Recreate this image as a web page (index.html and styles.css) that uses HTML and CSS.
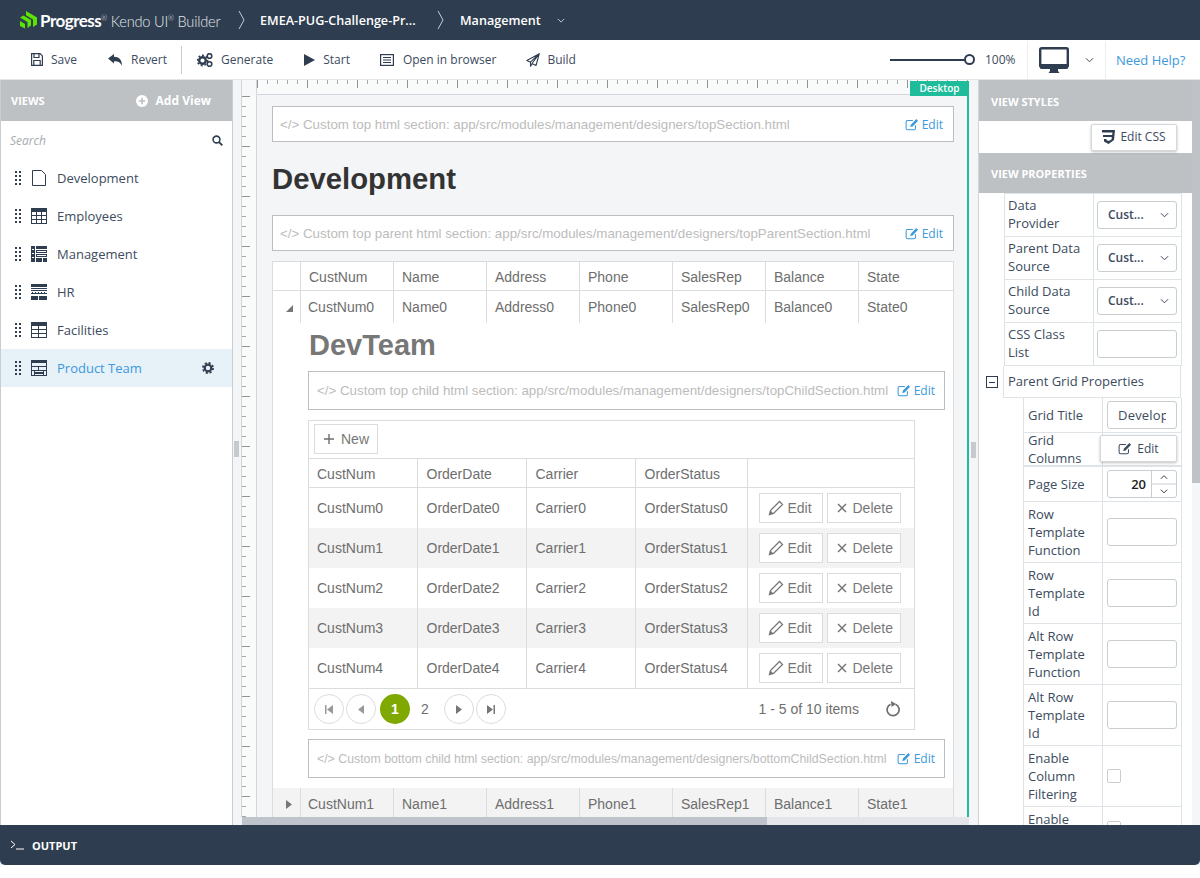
FILE: index.html
```html
<!DOCTYPE html>
<html lang="en">
<head>
  <meta charset="UTF-8">
  <title>Kendo UI Builder</title>
  <link rel="stylesheet" href="styles.css">
</head>
<body>
  <svg class="defs" width="0" height="0">
    <symbol id="dots" viewBox="0 0 6 14"><g fill="#2e3d50"><rect x="0" y="0" width="2" height="2"/><rect x="4" y="0" width="2" height="2"/><rect x="0" y="4" width="2" height="2"/><rect x="4" y="4" width="2" height="2"/><rect x="0" y="8" width="2" height="2"/><rect x="4" y="8" width="2" height="2"/><rect x="0" y="12" width="2" height="2"/><rect x="4" y="12" width="2" height="2"/></g></symbol>
    <symbol id="pencil" viewBox="0 0 16 16"><path d="M1.500 14.500l1-4L11.500 1.500l3 3-9 9z" fill="none" stroke="currentColor" stroke-width="1.300"/><path d="M2.500 10.500l3 3-4 1z" fill="currentColor"/></symbol>
    <symbol id="cross" viewBox="0 0 12 12"><path d="M2 2l8 8M10 2l-8 8" stroke="currentColor" stroke-width="1.500" fill="none"/></symbol>
    <symbol id="edit" viewBox="0 0 16 15"><path d="M12 8.500v3.200A1.800 1.800 0 0 1 10.200 13.500H3A1.800 1.800 0 0 1 1.200 11.700V4.800A1.800 1.800 0 0 1 3 3h6" fill="none" stroke="currentColor" stroke-width="1.200"/><path d="M6 10.500l.6-2.800L13 1.200l2 2-6.300 6.500z" fill="currentColor"/></symbol>
    <symbol id="chev" viewBox="0 0 10 6"><path d="M1 1l4 4 4-4" fill="none" stroke="currentColor" stroke-width="1.100"/></symbol>
  </svg>

  <div class="app">
    <header class="topbar">
      <svg class="logo" width="17" height="18" viewBox="0 0 17 18"><path d="M6 0l11 6.500v7L13 16V8.500L6 4.300z" fill="#5ce500"/><path d="M0 6.500l3.500-2L11 9v5.500L7.500 17v-6zM0 10l5 3v4.500L0 15z" fill="#5ce500"/></svg>
      <span class="brand"><b>Progress</b><sup>®</sup> Kendo UI<sup>®</sup> Builder</span>
      <svg class="crumb-sep" width="7" height="20" viewBox="0 0 7 20"><path d="M1 1l5 9-5 9" fill="none" stroke="#c6ccd4" stroke-width="1"/></svg>
      <span class="crumb project">EMEA-PUG-Challenge-Pr...</span>
      <svg class="crumb-sep" width="7" height="20" viewBox="0 0 7 20"><path d="M1 1l5 9-5 9" fill="none" stroke="#c6ccd4" stroke-width="1"/></svg>
      <span class="crumb">Management</span>
      <svg class="crumb-chev" width="8" height="5"><use href="#chev"/></svg>
    </header>

    <nav class="toolbar">
      <a class="tool save"><svg width="12" height="13" viewBox="0 0 12 13"><path d="M.6.6h8.500l2.300 2.300v9.500H.6z" fill="none" stroke="#2e3d50" stroke-width="1.200"/><path d="M3 1v3.500h5V1M2.800 12V7.500h6.400V12" fill="none" stroke="#2e3d50" stroke-width="1.200"/></svg>Save</a>
      <a class="tool revert"><svg width="14" height="12" viewBox="0 0 14 12"><path d="M0 4.500L6 0v2.800c5 0 8 2.700 8 9.200-1.500-3.500-3.500-4.700-8-4.700V9.500z" fill="#2e3d50"/></svg>Revert</a>
      <span class="tool-sep"></span>
      <a class="tool generate"><svg width="16" height="14" viewBox="0 0 16 14"><circle cx="5.500" cy="7.500" r="3.300" fill="none" stroke="#2e3d50" stroke-width="2.400"/><circle cx="5.500" cy="7.500" r="5.200" fill="none" stroke="#2e3d50" stroke-width="1.400" stroke-dasharray="2 1.900"/><circle cx="12.500" cy="3" r="2.300" fill="none" stroke="#2e3d50" stroke-width="1.600"/><circle cx="12.500" cy="11" r="2.300" fill="none" stroke="#2e3d50" stroke-width="1.600"/></svg>Generate</a>
      <a class="tool start"><svg width="11" height="12" viewBox="0 0 11 12"><path d="M0 0l11 6-11 6z" fill="#2e3d50"/></svg>Start</a>
      <a class="tool browser"><svg width="14" height="12" viewBox="0 0 14 12"><rect x=".6" y=".6" width="12.800" height="10.800" fill="none" stroke="#2e3d50" stroke-width="1.200"/><path d="M3 3.500h8M3 6h8M3 8.500h8" stroke="#2e3d50" stroke-width="1.200"/></svg>Open in browser</a>
      <a class="tool build"><svg width="14" height="14" viewBox="0 0 14 14"><path d="M13.300.7L.8 7.500l3.700 1.700L13.300.7 6 10.500l4 2zM4.500 9.200v4l1.800-2.500" fill="none" stroke="#2e3d50" stroke-width="1.100" stroke-linejoin="round"/></svg>Build</a>
      <div class="zoom-slider"><span class="zoom-line"></span><span class="zoom-knob"></span></div>
      <span class="zoom-value">100%</span>
      <span class="tool-sep light"></span>
      <svg class="monitor" width="30" height="26" viewBox="0 0 30 26"><rect x="1.200" y="1.200" width="27.600" height="18.800" rx="1.500" fill="none" stroke="#2e3d50" stroke-width="2.400"/><path d="M1 17h28v3.500a1.500 1.500 0 0 1-1.500 1.500h-25A1.500 1.500 0 0 1 1 20.500z" fill="#2e3d50"/><path d="M11 22h8v2l1.500 2h-11l1.500-2z" fill="#2e3d50"/></svg>
      <svg class="monitor-chev" width="9" height="6"><use href="#chev"/></svg>
      <span class="tool-sep light"></span>
      <a class="help">Need Help?</a>
    </nav>

    <main class="main">
      <aside class="views">
        <div class="panel-head"><span>VIEWS</span><span class="add-view"><svg width="12" height="12" viewBox="0 0 12 12"><circle cx="6" cy="6" r="6" fill="#fff"/><path d="M6 2.800v6.400M2.800 6h6.400" stroke="#bdc1c4" stroke-width="1.600"/></svg>Add View</span></div>
        <div class="search"><span>Search</span><svg width="11" height="11" viewBox="0 0 11 11"><circle cx="4.500" cy="4.500" r="3.400" fill="none" stroke="#2e3d50" stroke-width="1.600"/><path d="M7 7l3.300 3.300" stroke="#2e3d50" stroke-width="1.800"/></svg></div>
        <ul class="view-list">
          <li><svg class="drag"><use href="#dots"/></svg><svg class="view-icon" viewBox="0 0 16 16"><path d="M1.500.5h9l4 4v11h-13z" fill="none" stroke="#2e3d50" stroke-width="1"/></svg>Development</li>
          <li><svg class="drag"><use href="#dots"/></svg><svg class="view-icon" viewBox="0 0 16 16"><path d="M0 0h16v16H0z" fill="#2e3d50"/><path d="M1 4h4v3H1zM6 4h4v3H6zM11 4h4v3h-4zM1 8h4v3H1zM6 8h4v3H6zM11 8h4v3h-4zM1 12h4v3H1zM6 12h4v3H6zM11 12h4v3h-4z" fill="#fff"/></svg>Employees</li>
          <li><svg class="drag"><use href="#dots"/></svg><svg class="view-icon" viewBox="0 0 16 16"><path d="M0 0h4v16H0zM5 0h11v3H5zM5 4h11v3H5zM5 8h11v3H5zM5 12h6v4H5zM12 12h4v4h-4z" fill="#2e3d50"/><path d="M1 3h2v1H1zM1 7h2v1H1zM1 11h2v1H1zM6 5h9v1H6zM6 9h9v1H6z" fill="#fff"/></svg>Management</li>
          <li><svg class="drag"><use href="#dots"/></svg><svg class="view-icon" viewBox="0 0 16 16"><path d="M0 0h16v3H0zM0 4h16v1H0zM0 6h16v1H0zM0 9h16v1H0zM0 12h7v4H0zM8 12h8v4H8zM1 8h1v1H1zM4 8h1v1H4zM7 8h1v1H7zM10 8h1v1h-1zM13 8h1v1h-1z" fill="#2e3d50"/></svg>HR</li>
          <li><svg class="drag"><use href="#dots"/></svg><svg class="view-icon" viewBox="0 0 16 16"><path d="M0 0h16v16H0z" fill="#2e3d50"/><path d="M1 4h6v3H1zM8 4h7v3H8zM1 8h6v3H1zM8 8h7v3H8zM1 12h6v3H1zM8 12h7v3H8z" fill="#fff"/></svg>Facilities</li>
          <li class="active"><svg class="drag"><use href="#dots"/></svg><svg class="view-icon" viewBox="0 0 16 16"><path d="M0 0h16v16H0z" fill="#2e3d50"/><path d="M1 3h14v3H1zM1 7h6v3H1zM8 7h7v3H8zM1 11h2v4H1zM4 11h8v1H4zM4 14h8v1H4zM13 11h2v4h-2z" fill="#e6f1f8"/></svg>Product Team<svg class="gear" width="12" height="12" viewBox="0 0 12 12"><circle cx="6" cy="6" r="3.300" fill="none" stroke="#2e3d50" stroke-width="2.200"/><circle cx="6" cy="6" r="5.100" fill="none" stroke="#2e3d50" stroke-width="1.700" stroke-dasharray="2.200 1.800"/></svg></li>
        </ul>
      </aside>

      <section class="stage">
        <div class="gutter"><span class="grip"></span></div>
        <div class="ruler-corner"></div>
        <div class="ruler-top"><span class="badge">Desktop</span></div>
        <div class="gutter gutter-right"><span class="grip"></span></div>
        <div class="ruler-left"></div>
        <div class="canvas">
          <div class="code-box"><span>&lt;/&gt; Custom top html section: app/src/modules/management/designers/topSection.html</span><a class="code-edit"><svg width="14" height="13"><use href="#edit"/></svg>Edit</a></div>
          <h1 class="page-title">Development</h1>
          <div class="code-box"><span>&lt;/&gt; Custom top parent html section: app/src/modules/management/designers/topParentSection.html</span><a class="code-edit"><svg width="14" height="13"><use href="#edit"/></svg>Edit</a></div>

          <table class="grid parent-grid">
            <colgroup><col class="c-exp"><col class="c-p"><col class="c-p"><col class="c-p"><col class="c-p"><col class="c-p"><col class="c-p"><col></colgroup>
            <thead>
              <tr><th></th><th>CustNum</th><th>Name</th><th>Address</th><th>Phone</th><th>SalesRep</th><th>Balance</th><th>State</th></tr>
            </thead>
            <tbody>
              <tr class="row-open"><td class="exp"><svg width="7" height="7" viewBox="0 0 7 7"><path d="M7 0v7H0z" fill="#777"/></svg></td><td>CustNum0</td><td>Name0</td><td>Address0</td><td>Phone0</td><td>SalesRep0</td><td>Balance0</td><td>State0</td></tr>
              <tr>
                <td colspan="8" class="detail-cell">
                  <div class="detail">
                    <h2 class="detail-title">DevTeam</h2>
                    <div class="code-box child-box"><span>&lt;/&gt; Custom top child html section: app/src/modules/management/designers/topChildSection.html</span><a class="code-edit"><svg width="14" height="13"><use href="#edit"/></svg>Edit</a></div>

                    <div class="child-grid">
                      <div class="child-toolbar"><a class="btn"><svg width="12" height="12" viewBox="0 0 12 12"><path d="M6 1v10M1 6h10" stroke="#6e6e6e" stroke-width="1.400"/></svg>New</a></div>
                      <table class="grid">
                        <colgroup><col class="c1"><col class="c2"><col class="c3"><col class="c4"><col></colgroup>
                        <thead><tr><th>CustNum</th><th>OrderDate</th><th>Carrier</th><th>OrderStatus</th><th></th></tr></thead>
                        <tbody>
                          <tr><td>CustNum0</td><td>OrderDate0</td><td>Carrier0</td><td>OrderStatus0</td><td class="actions"><a class="btn"><svg width="16" height="16"><use href="#pencil"/></svg>Edit</a><a class="btn"><svg width="12" height="12"><use href="#cross"/></svg>Delete</a></td></tr>
                          <tr class="alt"><td>CustNum1</td><td>OrderDate1</td><td>Carrier1</td><td>OrderStatus1</td><td class="actions"><a class="btn"><svg width="16" height="16"><use href="#pencil"/></svg>Edit</a><a class="btn"><svg width="12" height="12"><use href="#cross"/></svg>Delete</a></td></tr>
                          <tr><td>CustNum2</td><td>OrderDate2</td><td>Carrier2</td><td>OrderStatus2</td><td class="actions"><a class="btn"><svg width="16" height="16"><use href="#pencil"/></svg>Edit</a><a class="btn"><svg width="12" height="12"><use href="#cross"/></svg>Delete</a></td></tr>
                          <tr class="alt"><td>CustNum3</td><td>OrderDate3</td><td>Carrier3</td><td>OrderStatus3</td><td class="actions"><a class="btn"><svg width="16" height="16"><use href="#pencil"/></svg>Edit</a><a class="btn"><svg width="12" height="12"><use href="#cross"/></svg>Delete</a></td></tr>
                          <tr><td>CustNum4</td><td>OrderDate4</td><td>Carrier4</td><td>OrderStatus4</td><td class="actions"><a class="btn"><svg width="16" height="16"><use href="#pencil"/></svg>Edit</a><a class="btn"><svg width="12" height="12"><use href="#cross"/></svg>Delete</a></td></tr>
                        </tbody>
                      </table>
                      <div class="pager">
                        <a class="page-btn"><svg width="8" height="9" viewBox="0 0 8 9"><path d="M0 0h1.500v9H0zM8 0v9L2 4.500z" fill="#999"/></svg></a>
                        <a class="page-btn"><svg width="6" height="9" viewBox="0 0 6 9"><path d="M6 0v9L0 4.500z" fill="#999"/></svg></a>
                        <a class="page-num current">1</a>
                        <a class="page-num">2</a>
                        <a class="page-btn"><svg width="6" height="9" viewBox="0 0 6 9"><path d="M0 0v9l6-4.500z" fill="#777"/></svg></a>
                        <a class="page-btn"><svg width="8" height="9" viewBox="0 0 8 9"><path d="M0 0v9l6-4.500zM6.500 0H8v9H6.500z" fill="#777"/></svg></a>
                        <span class="page-info">1 - 5 of 10 items</span>
                        <svg class="refresh" width="15" height="16" viewBox="0 0 15 16"><path d="M9.500 3.200A6 6 0 1 1 4.500 3.300" fill="none" stroke="#6e6e6e" stroke-width="1.700"/><path d="M5 0l5 3-4.500 3z" fill="#6e6e6e"/></svg>
                      </div>
                    </div>

                    <div class="code-box child-box bottom-box"><span>&lt;/&gt; Custom bottom child html section: app/src/modules/management/designers/bottomChildSection.html</span><a class="code-edit"><svg width="14" height="13"><use href="#edit"/></svg>Edit</a></div>
                  </div>
                </td>
              </tr>
              <tr class="alt row-closed"><td class="exp"><svg width="6" height="9" viewBox="0 0 6 9"><path d="M0 0v9l6-4.500z" fill="#777"/></svg></td><td>CustNum1</td><td>Name1</td><td>Address1</td><td>Phone1</td><td>SalesRep1</td><td>Balance1</td><td>State1</td></tr>
            </tbody>
          </table>
        </div>
        <div class="hscroll"><span class="hscroll-thumb"></span></div>
      </section>

      <aside class="props">
        <div class="props-body">
          <div class="panel-head">VIEW STYLES</div>
          <div class="css-row"><a class="raised css-btn"><svg width="13" height="14" viewBox="0 0 13 14"><path d="M0 0h13l-1 10-5.500 4L2 11.500V9h2.500v1l2 1 3-1.500.3-2.500H1V5h9.200l.2-2.500H0z" fill="#2e3d50"/></svg>Edit CSS</a></div>
          <div class="panel-head short">VIEW PROPERTIES</div>

          <div class="prop-table">
            <div class="prop"><label>Data Provider</label><div class="field"><span class="select">Cust...<svg width="9" height="6"><use href="#chev"/></svg></span></div></div>
            <div class="prop"><label>Parent Data Source</label><div class="field"><span class="select">Cust...<svg width="9" height="6"><use href="#chev"/></svg></span></div></div>
            <div class="prop"><label>Child Data Source</label><div class="field"><span class="select">Cust...<svg width="9" height="6"><use href="#chev"/></svg></span></div></div>
            <div class="prop"><label>CSS Class List</label><div class="field"><span class="input"></span></div></div>
          </div>

          <div class="group-row"><span class="toggle"></span><span class="group-name">Parent Grid Properties</span></div>

          <div class="prop-table nested">
            <div class="prop"><label>Grid Title</label><div class="field"><span class="input"><span class="clip">Develop</span></span></div></div>
            <div class="prop tight"><label>Grid Columns</label><div class="field"><a class="raised cols-btn"><svg width="14" height="13"><use href="#edit"/></svg>Edit</a></div></div>
            <div class="prop"><label>Page Size</label><div class="field"><span class="spinner"><b>20</b><span class="spin"><svg width="9" height="6" class="up"><use href="#chev"/></svg><svg width="9" height="6"><use href="#chev"/></svg></span></span></div></div>
            <div class="prop"><label>Row Template Function</label><div class="field"><span class="input"></span></div></div>
            <div class="prop"><label>Row Template Id</label><div class="field"><span class="input"></span></div></div>
            <div class="prop"><label>Alt Row Template Function</label><div class="field"><span class="input"></span></div></div>
            <div class="prop"><label>Alt Row Template Id</label><div class="field"><span class="input"></span></div></div>
            <div class="prop"><label>Enable Column Filtering</label><div class="field"><span class="check"></span></div></div>
            <div class="prop"><label>Enable Paging</label><div class="field"><span class="check"></span></div></div>
          </div>
        </div>
        <div class="vscroll"><span class="vscroll-thumb"></span></div>
      </aside>
    </main>

    <footer class="output"><svg width="14" height="10" viewBox="0 0 14 10"><path d="M1 1l4 3.500L1 8" fill="none" stroke="#fff" stroke-width="1"/><path d="M6 9h8" stroke="#fff" stroke-width="1"/></svg>OUTPUT</footer>
  </div>
</body>
</html>
```

FILE: styles.css
```css
* {
  box-sizing: border-box;
}
body {
  margin: 0;
  background: #fff;
  font-family: "Open Sans", sans-serif;
  font-size: 12px;
  color: #3c4b5e;
}
.defs {
  position: absolute;
}
ul {
  margin: 0;
  padding: 0;
  list-style: none;
}
.app {
  width: 1200px;
  height: 865px;
  display: flex;
  flex-direction: column;
  border-radius: 0 0 5px 5px;
  box-shadow: 0 4px 14px rgba(0, 0, 0, 0.18);
}

/* top bar */
.topbar {
  height: 40px;
  flex: none;
  display: flex;
  align-items: center;
  padding-left: 20px;
  background: #2e3d50;
  color: #fff;
}
.logo {
  margin-right: 3px;
}
.brand {
  font-family: "Lato", sans-serif;
  font-size: 14.600px;
  font-weight: 300;
  letter-spacing: -0.2px;
  color: #e4e7ea;
  width: 198px;
  white-space: nowrap;
}
.brand b {
  font-size: 17px;
  font-weight: 700;
  color: #fff;
  letter-spacing: -0.5px;
}
.brand sup {
  font-size: 7px;
  line-height: 0;
}
.crumb-sep {
  margin-right: 16px;
}
.brand + .crumb-sep {
  margin-right: 15px;
}
.crumb {
  font-size: 12.600px;
  font-weight: 600;
  white-space: nowrap;
}
.crumb.project {
  width: 177px;
}
.crumb-chev {
  margin-left: 16px;
  color: #d5d9de;
}

/* tool bar */
.toolbar {
  height: 40px;
  flex: none;
  display: flex;
  align-items: center;
  background: #fff;
  padding-left: 31px;
  border-bottom: 1px solid #e3e5e8;
}
.tool {
  display: flex;
  align-items: center;
  white-space: nowrap;
}
.tool svg {
  margin-right: 9px;
}
.tool.save svg {
  margin-right: 8px;
}
.tool.save {
  margin-right: 31px;
}
.tool.revert {
  margin-right: 14px;
}
.tool-sep {
  width: 1px;
  height: 28px;
  background: #c9ccd0;
}
.tool-sep.light {
  height: 38px;
  background: #eceef0;
}
.tool.generate {
  margin-left: 15px;
  margin-right: 31px;
}
.tool.generate svg {
  margin-right: 8px;
}
.tool.start svg {
  margin-right: 8px;
}
.tool.start {
  margin-right: 30px;
}
.tool.browser {
  margin-right: 30px;
}
.tool.build svg {
  margin-right: 7px;
}
.zoom-slider {
  width: 85px;
  margin-left: 314px;
  display: flex;
  align-items: center;
}
.zoom-line {
  width: 75px;
  height: 2px;
  background: #2e3d50;
}
.zoom-knob {
  width: 11px;
  height: 11px;
  border: 2px solid #2e3d50;
  border-radius: 50%;
  background: #fff;
  margin-left: -1px;
}
.zoom-value {
  margin-left: 10px;
  width: 42px;
}
.monitor {
  margin-left: 11px;
}
.monitor-chev {
  margin: 0 11px 0 16px;
  color: #3c4b5e;
}
.help {
  margin-left: 10px;
  font-size: 13px;
  color: #3b99dc;
  white-space: nowrap;
}

/* main area */
.main {
  flex: 1;
  min-height: 0;
  display: flex;
  overflow: hidden;
}
.panel-head {
  height: 41px;
  display: flex;
  align-items: center;
  justify-content: space-between;
  padding: 2px 12px 0;
  background: #bdc1c4;
  color: #fff;
  font-size: 11px;
  font-weight: 700;
}
.panel-head.short {
  height: 40px;
}

/* views list */
.views {
  width: 233px;
  flex: none;
  border-left: 1px solid #c9cdd1;
  border-right: 1px solid #c9cdd1;
  background: #fff;
}
.views .panel-head {
  padding: 0 21px 0 10px;
}
.add-view {
  display: flex;
  align-items: center;
  font-size: 12px;
}
.add-view svg {
  margin-right: 8px;
}
.search {
  height: 38px;
  display: flex;
  align-items: center;
  justify-content: space-between;
  padding: 0 9px;
  font-size: 12px;
  font-style: italic;
  color: #a6abb2;
}
.view-list li {
  height: 38px;
  display: flex;
  align-items: center;
  padding-left: 14px;
  font-size: 13px;
}
.view-list li.active {
  background: #e6f1f8;
  color: #3b99dc;
}
.drag {
  width: 6px;
  height: 14px;
  margin-right: 10px;
}
.view-icon {
  width: 16px;
  height: 16px;
  margin-right: 10px;
}
.gear {
  margin-left: auto;
  margin-right: 18px;
}

/* design stage */
.stage {
  width: 745px;
  flex: none;
  display: grid;
  grid-template-columns: 9px 15px 712px 9px;
  grid-template-rows: 15px 722px 8px;
  background: #f4f5f7;
}
.gutter {
  grid-row: 1 / 3;
  display: flex;
  align-items: center;
  justify-content: center;
  border-right: 1px solid #d2d5d9;
  padding-right: 1px;
}
.gutter-right {
  grid-column: 4;
  grid-row: 1 / 4;
  border-right: 0;
  padding: 0 0 6px;
}
.grip {
  width: 5px;
  height: 16px;
  background: #c6c9cd;
}
.ruler-corner {
  grid-column: 2;
  grid-row: 1;
  background: #f7f8f9;
  border-right: 1px solid #d2d5d9;
  border-bottom: 1px solid #f7f8f9;
}
.ruler-top {
  grid-column: 3;
  grid-row: 1;
  position: relative;
  border-bottom: 1px solid #d2d5d9;
  background:
    repeating-linear-gradient(90deg, #8f9499 0 1px, transparent 1px 50px) 0 0 / 100% 8px no-repeat,
    repeating-linear-gradient(90deg, #a5a9ae 0 1px, transparent 1px 10px) 0 0 / 100% 4px no-repeat,
    #f9fafa;
}
.badge {
  position: absolute;
  right: 0;
  top: 1px;
  width: 59px;
  height: 15px;
  background: #1fbc9c;
  color: #fff;
  font-size: 10px;
  font-weight: 600;
  line-height: 15px;
  text-align: center;
}
.ruler-left {
  grid-column: 2;
  grid-row: 2;
  border-right: 1px solid #d2d5d9;
  background:
    repeating-linear-gradient(180deg, #8f9499 0 1px, transparent 1px 50px) 0 1px / 8px 100% no-repeat,
    repeating-linear-gradient(180deg, #a5a9ae 0 1px, transparent 1px 10px) 0 1px / 4px 100% no-repeat,
    #f9fafa;
}
.canvas {
  grid-column: 3;
  grid-row: 2;
  overflow: hidden;
  padding: 11px 13px 0 15px;
  border-right: 2px solid #1fbc9c;
  font-family: "Liberation Sans", sans-serif;
}
.code-box {
  height: 36px;
  display: flex;
  align-items: center;
  justify-content: space-between;
  padding: 0 10px 0 7px;
  background: #fff;
  border: 1px solid #bbbdc0;
  color: #bcbcbc;
  font-size: 13.330px;
  white-space: nowrap;
}
.code-edit {
  display: flex;
  align-items: center;
  color: #3b99dc;
  font-family: "Open Sans", sans-serif;
  font-size: 12px;
}
.code-edit svg {
  margin-right: 3px;
}
.page-title {
  height: 73px;
  margin: 0;
  font-size: 29.300px;
  font-weight: 700;
  line-height: 73px;
  color: #333;
}

/* data grids */
.grid {
  width: 100%;
  table-layout: fixed;
  border-collapse: collapse;
  color: #6e6e6e;
  font-size: 14px;
}
.grid th,
.grid td {
  padding: 0 8px;
  text-align: left;
  font-weight: 400;
  border-left: 1px solid #dcdcdc;
  white-space: nowrap;
}
.grid th:first-child,
.grid td:first-child {
  border-left: 0;
}
.parent-grid {
  margin-top: 10px;
  background: #fff;
  border: 1px solid #dcdcdc;
  border-bottom: 0;
}
.parent-grid th {
  height: 29px;
  padding-top: 2px;
  border-bottom: 1px solid #dcdcdc;
}
.parent-grid td {
  height: 32px;
}
.c-exp {
  width: 28px;
}
.c-p {
  width: 93px;
}
.grid td.exp {
  padding: 0 0 0 13px;
}
.row-open td:nth-child(2),
.row-closed td:nth-child(2) {
  padding-left: 7px;
}
.parent-grid .row-closed td {
  height: 29px;
  padding-top: 2px;
}
.alt td {
  background: #f3f3f3;
}
.grid td.detail-cell {
  padding: 0;
  border-left: 0;
  height: auto;
}
.detail {
  padding: 0 8px 10px 35px;
}
.detail-title {
  height: 48px;
  margin: 0;
  padding-left: 1px;
  font-size: 29px;
  font-weight: 700;
  line-height: 44px;
  color: #777;
}
.child-box {
  height: 39px;
  padding: 0 9px 0 8px;
}
.bottom-box {
  font-size: 12.330px;
}
.child-grid {
  width: 607px;
  margin: 10px 0 9px;
  border: 1px solid #dcdcdc;
}
.child-toolbar {
  height: 38px;
  display: flex;
  align-items: center;
  padding-left: 5px;
  border-bottom: 1px solid #dcdcdc;
}
.btn {
  height: 30px;
  display: inline-flex;
  align-items: center;
  vertical-align: middle;
  padding: 0 8px;
  border: 1px solid #dcdcdc;
  background: #fff;
  color: #777;
  font-size: 14px;
}
.btn svg {
  flex: none;
  margin-right: 5px;
}
.child-toolbar .btn svg {
  margin-right: 6px;
}
.child-grid th {
  height: 29px;
  border-bottom: 1px solid #dcdcdc;
}
.child-grid th + th,
.child-grid td + td {
  padding-left: 9px;
}
.child-grid td {
  height: 40px;
}
.child-grid tr:last-child td {
  height: 41px;
  border-bottom: 1px solid #dcdcdc;
}
.c1 {
  width: 108px;
}
.c2 {
  width: 109px;
}
.c3 {
  width: 109px;
}
.c4 {
  width: 112px;
}
.child-grid td.actions {
  padding: 0 0 0 11px;
}
.actions .btn:first-child {
  width: 64px;
}
.actions .btn:first-child svg {
  margin-right: 4px;
}
.actions .btn + .btn {
  width: 74px;
  margin-left: 4px;
}
.pager {
  height: 40px;
  display: flex;
  align-items: center;
  padding-left: 5px;
  color: #6e6e6e;
  font-size: 14px;
}
.page-btn {
  width: 30px;
  height: 30px;
  display: flex;
  align-items: center;
  justify-content: center;
  margin-right: 2px;
  border: 1px solid #dcdcdc;
  border-radius: 50%;
}
.page-num {
  width: 30px;
  height: 30px;
  display: flex;
  align-items: center;
  justify-content: center;
  border-radius: 50%;
}
.page-num.current {
  margin-left: 2px;
  background: #7fa800;
  color: #fff;
  font-weight: 700;
}
.page-num + .page-btn {
  margin-left: 4px;
}
.page-info {
  margin-left: auto;
  margin-right: 27px;
}
.refresh {
  margin-right: 13px;
}
.hscroll {
  grid-column: 2 / 4;
  grid-row: 3;
  background: #e3e5e9;
}
.hscroll-thumb {
  display: block;
  width: 525px;
  height: 8px;
  background: #bfc3cb;
}

/* properties */
.props {
  width: 222px;
  flex: none;
  display: flex;
  border-left: 1px solid #d2d5d9;
}
.props-body {
  width: 213px;
  background: #fff;
  font-size: 13px;
  line-height: 18px;
}
.props .panel-head {
  padding-left: 12px;
}
.css-row {
  height: 32px;
  display: flex;
  align-items: center;
  justify-content: flex-end;
  padding-right: 15px;
}
.raised {
  display: flex;
  align-items: center;
  justify-content: center;
  background: #fff;
  border: 1px solid #d5d8db;
  border-radius: 2px;
  box-shadow: 0 1px 3px rgba(0, 0, 0, 0.25);
  font-size: 12px;
}
.css-btn {
  width: 86px;
  height: 27px;
}
.css-btn svg,
.cols-btn svg {
  margin-right: 5px;
}
.prop-table {
  width: 178px;
  margin-left: 25px;
  border-top: 1px solid #dde3e6;
  border-left: 1px solid #dde3e6;
  border-right: 1px solid #dde3e6;
}
.prop {
  display: grid;
  grid-template-columns: 88px 1fr;
  border-bottom: 1px solid #dde3e6;
}
.prop label {
  padding: 2px 10px 2px 3px;
  min-height: 42px;
}
.field {
  display: flex;
  align-items: center;
  justify-content: flex-end;
  border-left: 1px solid #dde3e6;
  padding-right: 4px;
}
.select,
.input,
.spinner {
  height: 28px;
  border: 1px solid #c9ced3;
  border-radius: 3px;
  background: #fff;
}
.select {
  width: 80px;
  display: flex;
  align-items: center;
  justify-content: space-between;
  padding: 0 7px 0 10px;
  font-weight: 600;
  font-size: 12px;
}
.input {
  width: 80px;
}
.group-row {
  display: flex;
  align-items: center;
  height: 32px;
  padding-left: 7px;
}
.toggle {
  width: 12px;
  height: 12px;
  border: 1px solid #2e3d50;
  margin-right: 5px;
  background: linear-gradient(#2e3d50, #2e3d50) center / 6px 1px no-repeat;
}
.group-name {
  flex: none;
  width: 178px;
  height: 32px;
  padding-left: 4px;
  line-height: 31px;
  border-left: 1px solid #dde3e6;
  border-bottom: 1px solid #dde3e6;
  border-right: 1px solid #dde3e6;
}
.nested {
  width: 159px;
  margin-left: 44px;
  border-top: 0;
}
.nested .prop {
  grid-template-columns: 78px 1fr;
}
.nested .prop label {
  padding: 3px 4px;
  min-height: 34px;
}
.nested .prop:nth-child(-n+3) label {
  padding-top: 8px;
}
.nested .prop.tight label {
  padding-top: 0;
  padding-bottom: 0;
  margin-top: -2px;
}
.nested .input,
.spinner {
  width: 70px;
}
.nested .input {
  padding-left: 10px;
  line-height: 26px;
}
.clip {
  display: block;
  width: 48px;
  overflow: hidden;
  letter-spacing: 0.2px;
  white-space: nowrap;
}
.prop.tight {
  height: 34px;
  border-bottom-width: 2px;
}
.prop.tight .field {
  position: relative;
}
.cols-btn {
  position: absolute;
  right: 4px;
  top: 2px;
  width: 77px;
  height: 27px;
}
.spinner {
  display: flex;
  align-items: stretch;
  color: #222;
}
.spinner b {
  flex: 1;
  text-align: right;
  padding-right: 5px;
  line-height: 26px;
  font-weight: 600;
}
.spin {
  width: 25px;
  display: flex;
  flex-direction: column;
  border-left: 1px solid #c9ced3;
}
.spin svg {
  flex: 1;
  padding: 0 8px;
  width: 100%;
}
.spin .up {
  transform: scaleY(-1);
  border-top: 1px solid #c9ced3;
}
.check {
  width: 14px;
  height: 14px;
  margin-right: 56px;
  border: 1px solid #c9ced3;
  border-radius: 2px;
}
.vscroll {
  width: 8px;
  background: #f5f6f7;
}
.vscroll-thumb {
  display: block;
  height: 403px;
  background: #bfc3c8;
}

/* output bar */
.output {
  height: 40px;
  flex: none;
  position: relative;
  display: flex;
  align-items: center;
  padding-left: 10px;
  background: #2e3d50;
  border-radius: 0 0 5px 5px;
  color: #fff;
  font-size: 11px;
  font-weight: 700;
}
.output svg {
  margin-right: 8px;
}
```
